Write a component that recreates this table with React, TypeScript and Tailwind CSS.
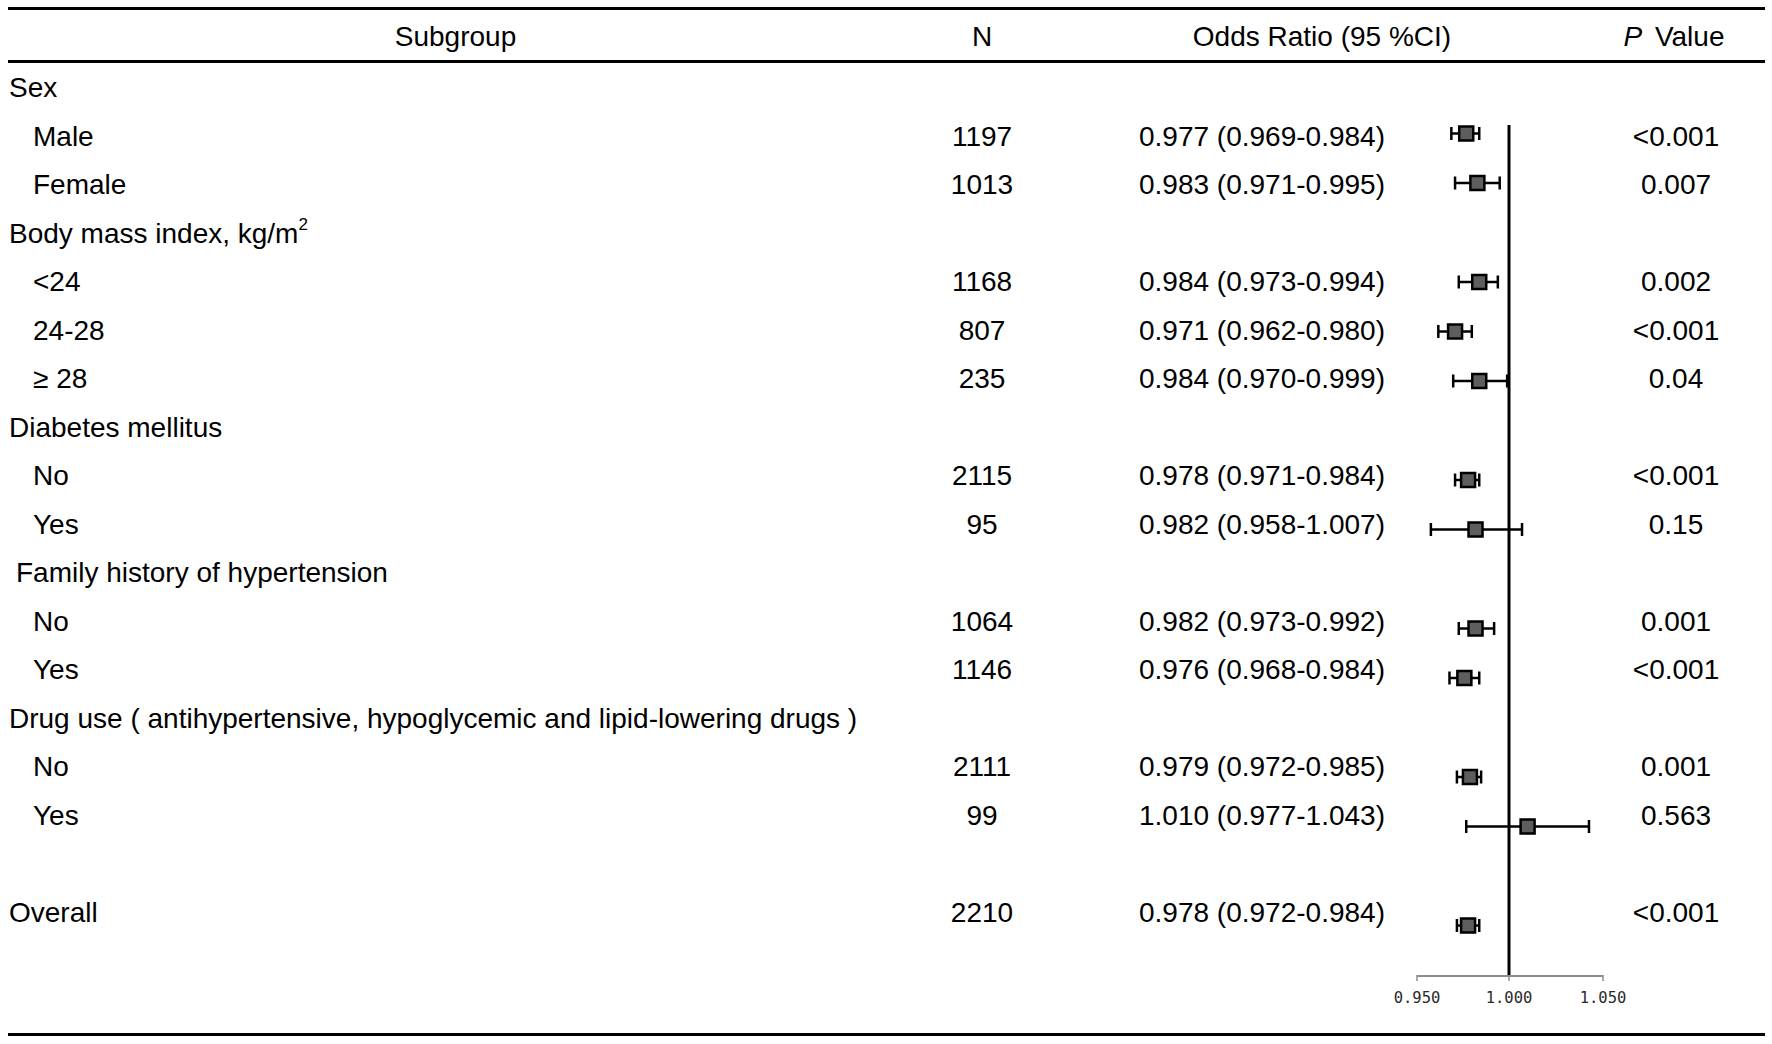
import React from "react";

type Row = {
  label?: React.ReactNode;
  pad?: string;
  n?: string;
  or?: string;
  est?: number;
  lo?: number;
  hi?: number;
  p?: string;
};

const rows: Row[] = [
  { label: "Sex", pad: "pl-[1px]" },
  { label: "Male", pad: "pl-[25px]", n: "1197", or: "0.977 (0.969-0.984)", est: 0.977, lo: 0.969, hi: 0.984, p: "<0.001" },
  { label: "Female", pad: "pl-[25px]", n: "1013", or: "0.983 (0.971-0.995)", est: 0.983, lo: 0.971, hi: 0.995, p: "0.007" },
  {
    label: (
      <>
        Body mass index, kg/m<sup className="text-[17px]">2</sup>
      </>
    ),
    pad: "pl-[1px]",
  },
  { label: "<24", pad: "pl-[25px]", n: "1168", or: "0.984 (0.973-0.994)", est: 0.984, lo: 0.973, hi: 0.994, p: "0.002" },
  { label: "24-28", pad: "pl-[25px]", n: "807", or: "0.971 (0.962-0.980)", est: 0.971, lo: 0.962, hi: 0.98, p: "<0.001" },
  { label: "≥ 28", pad: "pl-[25px]", n: "235", or: "0.984 (0.970-0.999)", est: 0.984, lo: 0.97, hi: 0.999, p: "0.04" },
  { label: "Diabetes mellitus", pad: "pl-[1px]" },
  { label: "No", pad: "pl-[25px]", n: "2115", or: "0.978 (0.971-0.984)", est: 0.978, lo: 0.971, hi: 0.984, p: "<0.001" },
  { label: "Yes", pad: "pl-[25px]", n: "95", or: "0.982 (0.958-1.007)", est: 0.982, lo: 0.958, hi: 1.007, p: "0.15" },
  { label: "Family history of hypertension", pad: "pl-[8px]" },
  { label: "No", pad: "pl-[25px]", n: "1064", or: "0.982 (0.973-0.992)", est: 0.982, lo: 0.973, hi: 0.992, p: "0.001" },
  { label: "Yes", pad: "pl-[25px]", n: "1146", or: "0.976 (0.968-0.984)", est: 0.976, lo: 0.968, hi: 0.984, p: "<0.001" },
  { label: "Drug use ( antihypertensive, hypoglycemic and lipid-lowering drugs )", pad: "pl-[1px]" },
  { label: "No", pad: "pl-[25px]", n: "2111", or: "0.979 (0.972-0.985)", est: 0.979, lo: 0.972, hi: 0.985, p: "0.001" },
  { label: "Yes", pad: "pl-[25px]", n: "99", or: "1.010 (0.977-1.043)", est: 1.01, lo: 0.977, hi: 1.043, p: "0.563" },
  {},
  { label: "Overall", pad: "pl-[1px]", n: "2210", or: "0.978 (0.972-0.984)", est: 0.978, lo: 0.972, hi: 0.984, p: "<0.001" },
];

// plot coords: x of 1.000 = 109, 1860px per unit
const px = (v: number) => 109 + (v - 1) * 1860;

function ForestPlot() {
  return (
    <svg
      width={220}
      height={969}
      viewBox="0 0 220 969"
      className="col-start-4 row-start-1 row-span-19 overflow-visible"
    >
      <line x1={109} y1={61} x2={109} y2={913} stroke="#000" strokeWidth={3} />
      <line x1={17} y1={912} x2={203} y2={912} stroke="#8c8c8c" strokeWidth={2} />
      {[17, 109, 203].map((x) => (
        <line key={x} x1={x} y1={911} x2={x} y2={917} stroke="#8c8c8c" strokeWidth={1.5} />
      ))}
      {[
        [17, "0.950"],
        [109, "1.000"],
        [203, "1.050"],
      ].map(([x, t]) => (
        <text
          key={t as string}
          x={x as number}
          y={934}
          textAnchor="middle"
          dominantBaseline="central"
          fontFamily="'DejaVu Sans Mono', 'Liberation Mono', monospace"
          fontSize={15.5}
          fill="#2a2a2a"
        >
          {t}
        </text>
      ))}
      {rows.map((r, i) => {
        if (r.est === undefined || r.lo === undefined || r.hi === undefined) return null;
        const cy = 20 + 49.5 * i;
        const cx = px(r.est);
        const a = px(r.lo);
        const b = px(r.hi);
        return (
          <g key={i}>
            <line x1={a} y1={cy} x2={b} y2={cy} stroke="#000" strokeWidth={2.5} />
            <line x1={a} y1={cy - 6.5} x2={a} y2={cy + 6.5} stroke="#000" strokeWidth={2.5} />
            <line x1={b} y1={cy - 6.5} x2={b} y2={cy + 6.5} stroke="#000" strokeWidth={2.5} />
            <rect x={cx - 7} y={cy - 7} width={14} height={14} fill="#5e5e5e" stroke="#000" strokeWidth={2.5} />
          </g>
        );
      })}
    </svg>
  );
}

export default function App() {
  return (
    <div
      className="w-[1772px] h-[1044px] bg-white text-black overflow-hidden pt-[7px]"
      style={{ fontFamily: "'Liberation Sans', Arial, sans-serif" }}
    >
      <div className="ml-[8px] w-[1757px] text-[28px] leading-none">
        <div className="border-t-[3px] border-b-[3px] border-black flex h-[56px] items-center pt-[4px]">
          <div className="w-[895px] text-center">Subgroup</div>
          <div className="w-[158px] text-center">N</div>
          <div className="w-[522px] text-center">Odds Ratio (95 %CI)</div>
          <div className="w-[182px] text-center">
            <span className="italic">P</span> <span className="ml-[5px]">Value</span>
          </div>
        </div>

        <div className="pt-[1px] border-b-[3px] border-black">
          <div className="grid grid-cols-[895px_158px_339px_220px_112px] grid-rows-[repeat(18,48.5px)_96px]">
            <ForestPlot />
            {rows.map((r, i) => (
              <React.Fragment key={i}>
                <div className={`flex items-center whitespace-nowrap ${r.pad ?? ""}`}>{r.label}</div>
                <div className="flex items-center justify-center">{r.n}</div>
                <div className="flex items-center pl-[78px] whitespace-nowrap">{r.or}</div>
                <div className="flex items-center justify-center">{r.p}</div>
              </React.Fragment>
            ))}
          </div>
        </div>
      </div>
    </div>
  );
}
